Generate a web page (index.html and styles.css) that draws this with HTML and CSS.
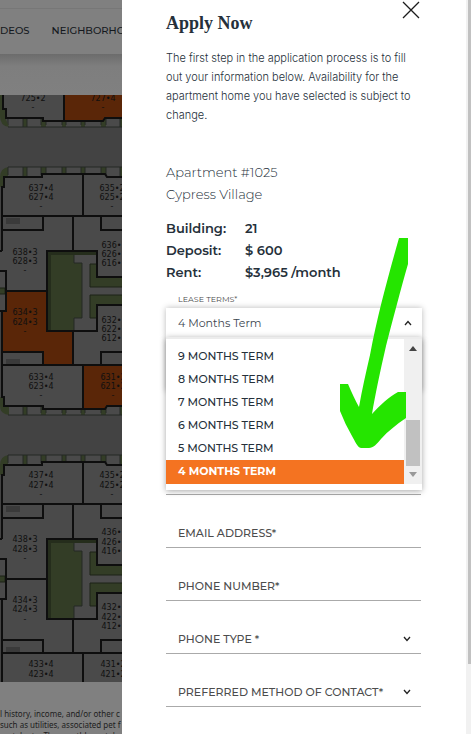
FILE: index.html
```html
<!DOCTYPE html>
<html lang="en">
<head>
<meta charset="utf-8">
<meta name="viewport" content="width=device-width, initial-scale=1">
<title>Apply Now</title>
<link rel="stylesheet" href="styles.css">
</head>
<body>
<div class="layout">
  <div class="site">
    <nav class="site-nav">
      <a href="#">DEOS</a>
      <a href="#">NEIGHBORHO</a>
    </nav>
    <div class="site-gap"></div>
    <svg class="map" viewBox="0 95 122 587" preserveAspectRatio="xMinYMin slice" role="img" aria-label="Site map">
      <defs>
        <g id="strips">
          <path class="unit" d="M8 0H122V10H8z"/>
          <path class="green" d="M23 0h4v10h-4zM41 0h5v10h-5zM62 0h4v10h-4zM81 0h4v10h-4zM101 0h5v10h-5zM120 0h2v10h-2z"/>
          <path class="thin" d="M8 0H122M8 0V8M23 0v10M27 0v10M41 0v8M46 0v8M62 0v8M66 0v8M81 0v8M85 0v8M101 0v8M106 0v8M120 0v10"/>
        </g>
        <g id="rooms">
          <path class="unit" d="M4 177H42V174H105L107 177H122V406H107L105 409H43V406H4V397H2V311H0V251H2V187H4z"/>
        </g>
        <g id="court">
          <path class="green" d="M48 252H74V263H82V318H74V331H48z"/>
          <path class="green edge" d="M123 277H97V264H90V287H123M123 295H90V318H97V305H123"/>
          <path class="thin" d="M74 252V263H82V318H74V331"/>
          <path class="shade" d="M48 252H97V255H51V331H48z"/>
          <path class="green edge" d="M-1 288H5V294H-1z"/>
          <path class="stairs" d="M6 218H20V224H6zM6 359H20V364H6z"/>
        </g>
        <g id="walls" class="wall">
          <path d="M2 251V187H4V177H42V174H105L107 177H123M83 174V216M2 216H123M73 216V251M2 230H43V216M101 216V230H123"/>
          <path d="M123 277H97V251H47V331H97V305H123M0 251H2M0 271H6V311H0M6 291H47M73 331V365M2 311V397H4V406H43V409H105L107 406H123M2 365H123M2 352H43V365M123 352H101V365M83 365V409"/>
        </g>
      </defs>
      <rect class="road" y="95" width="122" height="587"/>

      <use href="#strips" y="117"/>
      <path class="green" d="M0 95H5V117L9 127Q0 126 0 116z"/>
      <path class="unit" d="M3 95H64V121H43V118H6V109H3z"/>
      <path class="hot" d="M65 95H122V118H105L103 121H65z"/>
      <path class="wall" d="M3 95V109H6V118H43V121H103L105 118H123M64 95V121"/>
      <path class="thin" d="M8 127H122"/>

      <path class="green" d="M0 177Q0 168 9 167V177H4V187H0z"/>
      <use href="#strips" y="167"/>
      <use href="#strips" y="405"/>
      <path class="green" d="M0 397H4V406H9V415Q0 414 0 406z"/>
      <use href="#rooms"/>
      <path class="hot" d="M6 292H47V331H73V365H43V352H2V311H6zM84 366H122V406H107L105 409H84z"/>
      <use href="#court"/>
      <use href="#walls"/>
      <path class="thin" d="M8 415H122"/>

      <g transform="translate(0 288)">
        <path class="green" d="M0 177Q0 168 9 167V177H4V187H0z"/>
        <use href="#strips" y="167"/>
        <use href="#rooms"/>
        <use href="#court"/>
        <use href="#walls"/>
      </g>

      <g class="names">
        <text x="33" y="101">725•2</text><text x="33" y="110">-</text>
        <text x="103" y="101">727•4</text><text x="103" y="110">-</text>
        <text x="41" y="191">637•4</text><text x="41" y="200">627•4</text><text x="41" y="209">-</text>
        <text x="112" y="191">635•2</text><text x="112" y="200">625•2</text><text x="112" y="209">-</text>
        <text x="25" y="255">638•3</text><text x="25" y="264">628•3</text><text x="25" y="273">-</text>
        <text x="25" y="315">634•3</text><text x="25" y="325">624•3</text><text x="25" y="334">-</text>
        <text x="114" y="248">636•1</text><text x="114" y="257">626•1</text><text x="114" y="266">616•1</text>
        <text x="114" y="323">632•1</text><text x="114" y="332">622•1</text><text x="114" y="341">612•1</text>
        <text x="41" y="380">633•4</text><text x="41" y="389">623•4</text><text x="41" y="398">-</text>
        <text x="113" y="380">631•2</text><text x="113" y="389">621•2</text><text x="113" y="398">-</text>
        <text x="41" y="478">437•4</text><text x="41" y="488">427•4</text><text x="41" y="497">-</text>
        <text x="112" y="478">435•2</text><text x="112" y="488">425•2</text><text x="112" y="497">-</text>
        <text x="25" y="542">438•3</text><text x="25" y="552">428•3</text><text x="25" y="561">-</text>
        <text x="25" y="603">434•3</text><text x="25" y="612">424•3</text><text x="25" y="622">-</text>
        <text x="114" y="535">436•1</text><text x="114" y="545">426•1</text><text x="114" y="554">416•1</text>
        <text x="114" y="610">432•1</text><text x="114" y="620">422•1</text><text x="114" y="629">412•1</text>
        <text x="41" y="667">433•4</text><text x="41" y="677">423•4</text>
        <text x="113" y="667">431•2</text><text x="113" y="677">421•2</text>
      </g>
    </svg>
    <p class="legal">l history, income, and/or other c<br>such as utilities, associated pet f<br>rental rate. The monthly rental</p>
  </div>

  <main class="panel">
    <button class="close" type="button" aria-label="Close">
      <svg viewBox="0 0 18 18"><path d="M1 1L17 17M17 1L1 17"/></svg>
    </button>
    <h1>Apply Now</h1>
    <p class="intro">The first step in the application process is to fill<br>out your information below. Availability for the<br>apartment home you have selected is subject to<br>change.</p>
    <p class="home">Apartment #1025<br>Cypress Village</p>
    <dl class="facts">
      <dt>Building:</dt><dd>21</dd>
      <dt>Deposit:</dt><dd>$ 600</dd>
      <dt>Rent:</dt><dd>$3,965 /month</dd>
    </dl>
    <form class="form">
      <div class="lease">
        <label for="lease">LEASE TERMS*</label>
        <div class="picker">
          <select id="lease"><option>4 Months Term</option></select>
          <svg class="chevron" viewBox="0 0 8 6"><path d="M1 5L4 1.5L7 5"/></svg>
        </div>
        <div class="menu">
          <ul class="terms" role="listbox" aria-label="Lease terms">
            <li role="option">9 MONTHS TERM</li>
            <li role="option">8 MONTHS TERM</li>
            <li role="option">7 MONTHS TERM</li>
            <li role="option">6 MONTHS TERM</li>
            <li role="option">5 MONTHS TERM</li>
            <li role="option" aria-selected="true">4 MONTHS TERM</li>
          </ul>
          <div class="bar">
            <svg viewBox="0 0 8 5"><path d="M0 5L4 0L8 5z"/></svg>
            <span class="thumb"></span>
            <svg class="down" viewBox="0 0 8 5"><path d="M0 0L4 5L8 0z"/></svg>
          </div>
        </div>
        <svg class="arrow" viewBox="340 238 68 210"><path d="M399 238H408V264C401 288 392 323 386 346C380 372 375 396 372 414C380 405 389 397 398 392H406V418C396 425 388 431 381 439C377 444 373 448 369 448H361C357 447 355 441 352 436Q345 424 340 411V384H348C352 393 355 400 359 407C362 390 366 372 370 355C378 313 388 277 399 238z"/></svg>
      </div>
      <div class="card"></div>
      <div class="field"><input type="text" aria-label="First name"></div>
      <div class="field"><input type="text" aria-label="Last name"></div>
      <div class="field"><input type="email" placeholder="EMAIL ADDRESS*" aria-label="Email address"></div>
      <div class="field"><input type="tel" placeholder="PHONE NUMBER*" aria-label="Phone number"></div>
      <div class="field">
        <select aria-label="Phone type"><option>PHONE TYPE *</option></select>
        <svg class="chevron" viewBox="0 0 8 6"><path d="M1 1L4 4.5L7 1"/></svg>
      </div>
      <div class="field">
        <select aria-label="Preferred method of contact"><option>PREFERRED METHOD OF CONTACT*</option></select>
        <svg class="chevron" viewBox="0 0 8 6"><path d="M1 1L4 4.5L7 1"/></svg>
      </div>
    </form>
  </main>
  <div class="page-bar"><span></span></div>
</div>
</body>
</html>
```
FILE: styles.css
```css
* { box-sizing: border-box; }

body {
  margin: 0;
  font-family: Montserrat, Inter, sans-serif;
  color: #25303a;
  background: #fff;
}

.layout {
  display: grid;
  grid-template-columns: 122px minmax(0, 1fr) 5px;
  height: 100vh;
  overflow: hidden;
}

/* Dimmed site behind the panel */
.site {
  overflow: hidden;
  background: #808080;
}

.site-nav {
  display: flex;
  align-items: center;
  gap: 22px;
  height: 46px;
  margin-top: 8px;
  padding-bottom: 2px;
  border-top: 1px solid #777;
}

.site-nav a {
  color: #14181d;
  font-size: 10px;
  font-weight: 500;
  text-decoration: none;
}

.site-gap {
  height: 41px;
  background: linear-gradient(#6c6c6c, #7e7e7e 12px, #808080);
}

.map {
  display: block;
  width: 100%;
}

.road { fill: #434343; }
.unit { fill: #4a4a4a; }
.hot { fill: #5a2608; }
.green { fill: #333d26; }
.edge { stroke: #1c2217; stroke-width: 1; }
.shade { fill: #252d1c; }
.stairs { fill: #3a3a3a; }
.thin { fill: none; stroke: #252925; stroke-width: 1; }
.wall { fill: none; stroke: #0e0e0e; stroke-width: 2; }

.names {
  fill: #101010;
  font-family: "DejaVu Sans", sans-serif;
  font-size: 8px;
  text-anchor: middle;
}

.legal {
  margin: 26px 0 0;
  color: #1d1d1d;
  font: 8px/11px "Noto Sans", sans-serif;
  white-space: nowrap;
}

/* Application panel */
.panel {
  position: relative;
  padding: 11px 45px 28px 44px;
  background: #fff;
}

.close {
  position: absolute;
  top: 1px;
  right: 46px;
  width: 18px;
  height: 18px;
  padding: 0;
  border: 0;
  background: none;
}

.close svg {
  display: block;
  fill: none;
  stroke: #1c1c1c;
  stroke-width: 1.3;
}

h1 {
  margin: 0 0 14px;
  font: bold 18px/24px "Liberation Serif", serif;
}

.intro {
  margin: 0 0 36px;
  font-family: Inter, sans-serif;
  font-size: 11px;
  font-weight: 300;
  line-height: 19px;
  white-space: nowrap;
}

.home {
  margin: 0 0 12px;
  font-size: 13px;
  font-weight: 300;
  line-height: 22px;
}

.facts {
  display: grid;
  grid-template-columns: 79px 1fr;
  margin: 0 0 9px;
  font-size: 13px;
  font-weight: 600;
  line-height: 22px;
}

.facts dd { margin: 0; }

.lease { position: relative; }

.lease label {
  display: block;
  padding-left: 12px;
  color: #4a4a4a;
  font-size: 8px;
  line-height: 14px;
}

.form { margin-right: -1px; }

.picker,
.field {
  display: flex;
  align-items: center;
  justify-content: space-between;
  padding: 0 10px 0 12px;
}

.picker {
  height: 29px;
  margin-top: 2px;
  background: #fff;
  box-shadow: 0 0 6px rgba(0, 0, 0, .28);
}

select,
input {
  flex: 1;
  min-width: 0;
  padding: 0;
  border: 0;
  outline: 0;
  appearance: none;
  background: none;
  color: #4c4c4c;
  font: 500 11px/16px Montserrat, Inter, sans-serif;
}

input::placeholder { color: #4c4c4c; opacity: 1; }

#lease { font-weight: 400; color: #3c464f; }

.chevron {
  width: 8px;
  height: 6px;
  fill: none;
  stroke: #222;
  stroke-width: 1.3;
}

.menu {
  position: absolute;
  z-index: 1;
  top: 100%;
  left: 0;
  right: 0;
  display: flex;
  padding-bottom: 6px;
  border-top: 2px solid #ececec;
  background: #fff;
  box-shadow: 0 1px 6px rgba(0, 0, 0, .35);
}

.terms {
  flex: 1;
  margin: 0;
  padding: 6px 0 0;
  list-style: none;
}

.terms li {
  height: 23px;
  padding-left: 12px;
  font-size: 11px;
  font-weight: 500;
  line-height: 23px;
}

.terms li[aria-selected] {
  height: 24px;
  color: #fff;
  font-weight: 700;
  background: #f47321;
}

.bar {
  display: flex;
  flex-direction: column;
  align-items: center;
  width: 18px;
  padding: 7px 0;
  background: #f0f0f0;
}

.bar svg { width: 8px; height: 5px; fill: #444; }
.bar .down { fill: #999; }

.thumb {
  width: 14px;
  height: 46px;
  margin: auto 0 6px;
  background: #c1c1c1;
}

.arrow {
  position: absolute;
  z-index: 2;
  top: -54px;
  right: 14px;
  width: 68px;
  height: 210px;
  fill: #25e500;
  pointer-events: none;
}

.card {
  height: 52px;
  box-shadow: 0 2px 6px rgba(0, 0, 0, .3);
}

.field {
  height: 53px;
  margin-right: 1px;
  padding-top: 24px;
  border-bottom: 1px solid #aaa;
}

.page-bar {
  background: #f1f1f1;
}

.page-bar span {
  display: block;
  width: 3px;
  height: 90.4%;
  margin-left: auto;
  background: #c1c1c1;
}
```
